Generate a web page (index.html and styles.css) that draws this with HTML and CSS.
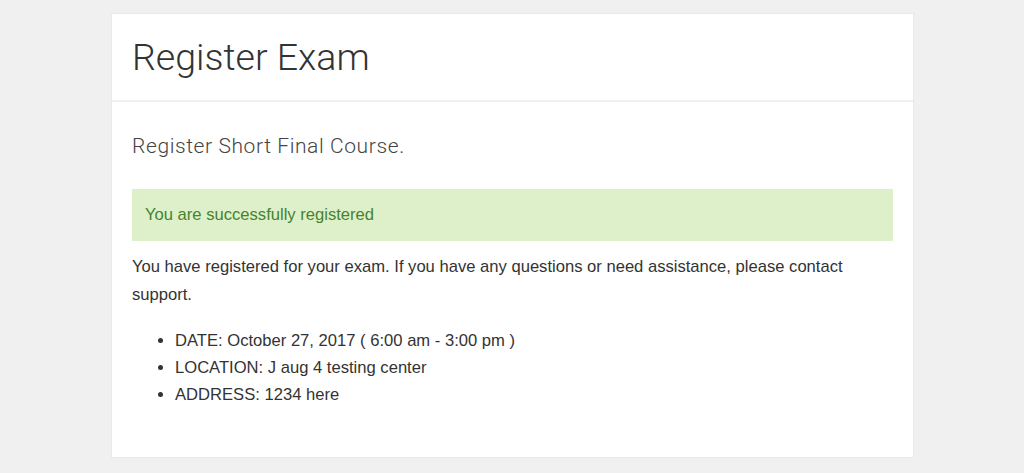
FILE: index.html
```html
<!DOCTYPE html>
<html lang="en">
<head>
    <meta charset="UTF-8">
    <meta name="viewport" content="width=device-width, initial-scale=1.0">
    <title>Register Exam</title>
    <link rel="stylesheet" href="styles.css">
</head>
<body>
    <div class="card">
        <div class="card-header">
            <h1>Register Exam</h1>
        </div>
        <div class="card-body">
            <h3 class="subtitle">Register Short Final Course.</h3>
            <div class="alert-success">You are successfully registered</div>
            <p class="note">You have registered for your exam. If you have any questions or need assistance, please contact support.</p>
            <ul class="details">
                <li>DATE: October 27, 2017 ( 6:00 am - 3:00 pm )</li>
                <li>LOCATION: J aug 4 testing center</li>
                <li>ADDRESS: 1234 here</li>
            </ul>
        </div>
    </div>
</body>
</html>
```

FILE: styles.css
```css
body, html {
    margin: 0;
    padding: 0;
    background: #f0f0f0;
    font-family: "Liberation Sans", Arial, sans-serif;
    color: #333;
}

.card {
    width: 801px;
    margin: 13px auto 0 111px;
    background: #fff;
    border: 1px solid #e9e9e9;
}

.card-header {
    padding: 22px 20px 22px 20px;
    border-bottom: 2px solid #f0f0f0;
}

.card-header h1 {
    margin: 0;
    font-family: Roboto, "Liberation Sans", sans-serif;
    font-weight: 300;
    font-size: 37.5px;
    line-height: 42px;
    color: #333;
}

.card-body {
    padding: 30px 20px 49px 20px;
}

.subtitle {
    margin: 0 0 29px 0;
    font-family: Roboto, "Liberation Sans", sans-serif;
    font-weight: 300;
    font-size: 21px;
    letter-spacing: 0.6px;
    line-height: 28px;
    color: #444;
}

.alert-success {
    padding: 15px 13px;
    background: #def0c9;
    color: #46832f;
    font-size: 16.6px;
    line-height: 22px;
}

.note {
    margin: 12px 0 18px 0;
    font-size: 16.6px;
    line-height: 28px;
}

.details {
    margin: 0;
    padding-left: 43px;
    font-size: 16.6px;
    line-height: 27px;
}
```
